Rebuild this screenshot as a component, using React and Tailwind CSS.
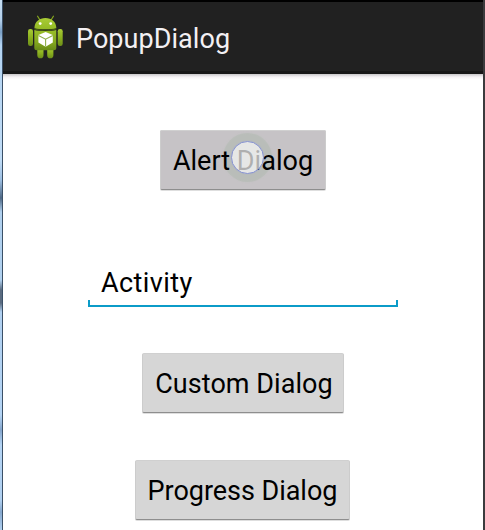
function AndroidIcon() {
  return (
    <svg className="h-[44px] w-[37px] shrink-0" viewBox="0 0 37 44" fill="none">
      <defs>
        <linearGradient id="head" x1="0" y1="0" x2="0" y2="1">
          <stop offset="0" stopColor="#a9cb35" />
          <stop offset="1" stopColor="#94ba24" />
        </linearGradient>
        <linearGradient id="body" x1="0" y1="0" x2="0" y2="1">
          <stop offset="0" stopColor="#9abf28" />
          <stop offset="0.6" stopColor="#85a91f" />
          <stop offset="1" stopColor="#688a18" />
        </linearGradient>
        <linearGradient id="limb" x1="0" y1="0" x2="0" y2="1">
          <stop offset="0" stopColor="#a9cc35" />
          <stop offset="0.5" stopColor="#8bb01f" />
          <stop offset="1" stopColor="#6d8f18" />
        </linearGradient>
      </defs>
      <path d="M12.8 4.8 10.6 1.2M24.2 4.8 26.4 1.2" stroke="#86a81e" strokeWidth="1.2" strokeLinecap="round" />
      <rect x="1" y="14" width="5" height="17" rx="2.2" fill="url(#limb)" />
      <rect x="30.7" y="14" width="5" height="17" rx="2.2" fill="url(#limb)" />
      <path d="M10.3 33h6.2v7.2a3 3 0 0 1-6.2 0ZM20.2 33h6.2v7.2a3 3 0 0 1-6.2 0Z" fill="url(#limb)" />
      <path d="M7.3 15c5 1.2 17 1.2 22 0v17.7a2.5 2.5 0 0 1-2.5 2.5h-17a2.5 2.5 0 0 1-2.5-2.5Z" fill="url(#body)" />
      <path d="M7.4 13.2C7.6 6.7 12.3 3 18.4 3s10.8 3.7 11 10.2c-5 1.3-17 1.3-22 0Z" fill="url(#head)" />
      <path d="M7.3 14c5 1.3 17 1.3 22 0" stroke="#4b6010" strokeWidth="1.2" />
      <circle cx="13.2" cy="8.6" r="1.4" fill="#fff" />
      <circle cx="23.7" cy="8.6" r="1.4" fill="#fff" />
      <path d="m18.6 17 7.2 3v7.4l-7.2 4.3-7.2-4.3V20Z" fill="#fff" />
      <path d="m11.4 20.6 7.2 3.6 7.2-3.6M18.6 24.2v7.4" stroke="#8fae48" strokeWidth="1.1" />
    </svg>
  );
}

function Button({ className, children }) {
  return (
    <button
      className={`flex h-[60px] items-center justify-center rounded-[2px] border border-x-[#cccccc] border-t-[#d0d0d0] border-b-[#8e8e8e] pt-[2px] text-[27px] leading-8 whitespace-nowrap text-black shadow-[0_1px_0_#dedede] ${className}`}
    >
      {children}
    </button>
  );
}

export default function App() {
  return (
    <div className="flex h-[530px] w-[485px] overflow-hidden bg-white font-['Roboto',sans-serif]">
      <div className="w-[2px] shrink-0 bg-[linear-gradient(to_bottom,#c5dcf0_0px,#b4d0ea_20px,#7a9fc5_32px,#b4d4f2_45px,#c0dcf6_160px,#9dbfe2_180px,#4e6885_198px,#b0d0ee_212px,#b0d0ee_280px,#5a6b80_290px,#5a6b80_303px,#b0d0f0_312px,#b4d4f4_415px,#84a5cc_430px,#b4d4f4_445px,#b0d0f0_500px,#86a8ce_512px,#b0d0f0_530px)]" />
      <div className="w-px shrink-0 bg-[#3b5067]" />
      <div className="flex min-w-0 flex-1 flex-col">
        <header className="flex h-[74px] shrink-0 items-center border-t-2 border-b-[3px] border-t-black border-b-[#171717] bg-[#212121] pl-6">
          <AndroidIcon />
          <h1 className="ml-[12px] pt-[5px] text-[27px] leading-8 font-normal tracking-[0.05px] text-[#f3f0f3]">PopupDialog</h1>
        </header>
        <div className="h-[6px] shrink-0 bg-linear-to-b from-[#c8c6c8] via-[#f5f2f4] to-white" />
        <main className="flex flex-1 flex-col items-center pt-[50px]">
          <div className="relative isolate">
            <span className="absolute top-[3px] left-[63px] -z-10 size-[49px] rounded-full bg-[radial-gradient(circle,#b9bdb9_66%,#bec1be_85%,#c2c2c3_100%)] shadow-[0_0_2px_#c0c2c0]" />
            <span className="absolute inset-0 -z-20 rounded-[2px] bg-[#c6c3c6]" />
            <Button className="w-[166px] tracking-[0.02px]">Alert Dialog</Button>
            <span className="absolute top-[11px] left-[71px] size-[33px] rounded-full border border-[#8793d2] bg-[#fafafa]/70 shadow-[0_0_1px_#9aa4d4]" />
          </div>
          <div className="mt-[75px] flex h-[42px] w-[310px] flex-col">
            <input
              className="h-[35px] w-full bg-transparent px-[13px] text-[27px] leading-8 tracking-[0.4px] text-black outline-none"
              defaultValue="Activity"
            />
            <div className="h-[7px] border-2 border-t-0 border-[#0b9bc8]" />
          </div>
          <Button className="mt-[46px] w-[202px] shrink-0 bg-[#d6d6d6] pl-[2px] tracking-[0.05px]">Custom Dialog</Button>
          <Button className="mt-[47px] mr-px w-[215px] shrink-0 bg-[#d6d6d6] tracking-[-0.04px]">Progress Dialog</Button>
        </main>
      </div>
      <div className="w-[2px] shrink-0 bg-[#3b3b3d]" />
    </div>
  );
}
